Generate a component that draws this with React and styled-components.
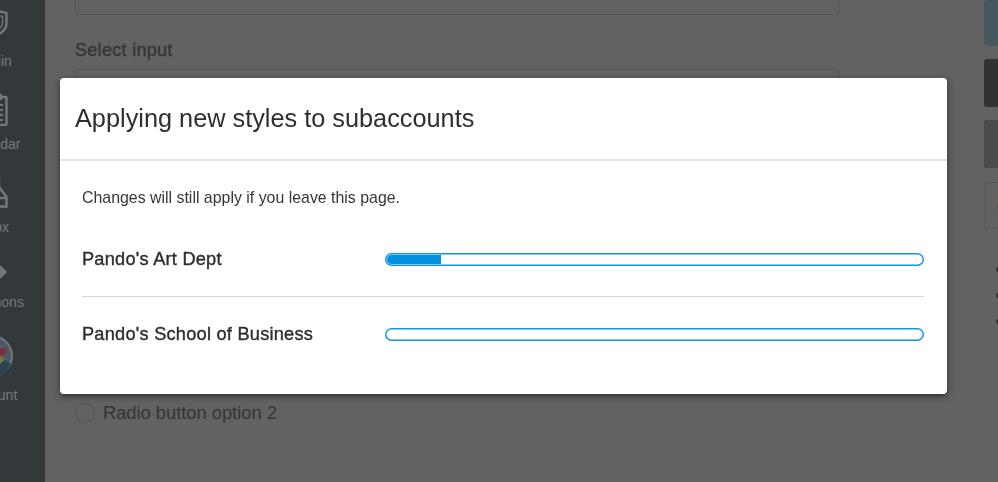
import React from 'react';
import styled, { createGlobalStyle } from 'styled-components';

const GlobalStyle = createGlobalStyle`
    html, body {
        margin: 0;
        padding: 0;
        height: 100%;
        overflow: hidden;
        background: #626262;
        font-family: "Liberation Sans", Arial, sans-serif;
    }
`;

const Page = styled.div`
    display: flex;
    width: 998px;
    height: 482px;
    overflow: hidden;
    background: #626262;
`;

const Sidebar = styled.nav`
    flex: 0 0 45px;
    overflow: hidden;
    background: #33383b;
`;

const SidebarList = styled.div`
    display: flex;
    flex-direction: column;
    align-items: center;
    width: 90px;
    margin-left: -53px;
`;

const SidebarItem = styled.div`
    display: flex;
    flex-direction: column;
    align-items: center;
    gap: ${({ $gap }) => $gap}px;
    margin-top: ${({ $top }) => $top}px;
    color: #75787b;
`;

const SidebarLabel = styled.span`
    font-size: 14px;
    line-height: 20px;
    white-space: nowrap;
`;

const Main = styled.main`
    flex: 0 0 765px;
    margin-left: 30px;
`;

const Field = styled.div`
    height: 40px;
    border: 1px solid #585858;
    border-radius: 3px;
    box-sizing: border-box;
`;

const TopField = styled(Field)`
    margin-top: -25px;
`;

const FieldLabel = styled.label`
    display: block;
    margin: 25px 0 9px;
    font-size: 18px;
    line-height: 20px;
    letter-spacing: .3px;
    -webkit-text-stroke: .3px #343434;
    color: #343434;
`;

const RadioGroup = styled.div`
    display: flex;
    flex-direction: column;
    gap: 12px;
    margin-top: 262px;
`;

const RadioRow = styled.div`
    display: flex;
    align-items: center;
    gap: 8px;
    height: 20px;
    font-size: 18.3px;
    color: #343434;
`;

const RadioCircle = styled.span`
    width: 20px;
    height: 20px;
    box-sizing: border-box;
    border: 1px solid #555;
    border-radius: 50%;
`;

const SideColumn = styled.aside`
    display: flex;
    flex-direction: column;
    gap: 13px;
    flex: 0 0 24px;
    margin-left: 144px;
`;

const SideButton = styled.div`
    height: ${({ $height }) => $height}px;
    background: ${({ $color }) => $color};
    border-radius: 3px;
`;

const OutlineBox = styled.div`
    display: flex;
    align-items: center;
    height: 47px;
    margin-top: 1px;
    padding-left: 12px;
    box-sizing: border-box;
    border: 1px solid #585858;
    border-radius: 3px;
    color: #2c2c2c;
    font-size: 16px;
    font-weight: bold;
`;

const Bullets = styled.div`
    display: flex;
    flex-direction: column;
    gap: 21px;
    margin: 25px 0 0 12px;
`;

const Bullet = styled.span`
    width: 5px;
    height: 5px;
    border-radius: 50%;
    background: #303030;
`;

const Overlay = styled.div`
    position: fixed;
    top: 0;
    left: 0;
    width: 100%;
    height: 100%;
    box-sizing: border-box;
    padding: 78px 0 0 60px;
`;

const Modal = styled.section`
    width: 887px;
    height: 316px;
    overflow: hidden;
    background: #fff;
    border-radius: 4px;
    box-shadow: 0 2px 6px rgba(0, 0, 0, .55);
`;

const ModalHeader = styled.header`
    display: flex;
    align-items: center;
    height: 81px;
    padding-left: 15px;
    border-bottom: 2px solid #e2e2e2;
`;

const ModalTitle = styled.h1`
    margin: 0;
    font-size: 25.3px;
    font-weight: normal;
    color: #2d2f31;
`;

const ModalBody = styled.div`
    padding: 25px 23px 0 22px;
`;

const Intro = styled.p`
    margin: 0 0 12px;
    font-size: 15.9px;
    line-height: 24px;
    color: #33373a;
`;

const AccountRow = styled.div`
    display: grid;
    grid-template-columns: 303px 1fr;
    align-items: center;
    height: 74px;
    & + & {
        border-top: 1px solid #d6d6d6;
    }
`;

const AccountName = styled.span`
    font-size: 18.2px;
    letter-spacing: .24px;
    -webkit-text-stroke: .4px #2d2f31;
    color: #2d2f31;
`;

const ProgressTrack = styled.div`
    display: flex;
    height: 13px;
    box-sizing: border-box;
    padding: 2px;
    border-radius: 7px;
    box-shadow: inset 0 0 0 1.5px #0c97e6;
    overflow: hidden;
`;

const ProgressFill = styled.div`
    height: 100%;
    background: #0090e0;
    border-radius: 5px 0 0 5px;
`;

const ShieldIcon = () => (
    <svg width="32" height="30" viewBox="0 0 32 30" fill="none" stroke="#75787b" strokeWidth="2.4">
        <path d="M16 1.5 L30.5 5 V15 C30.5 22 24 27 16 29 C8 27 1.5 22 1.5 15 V5 Z" />
        <path d="M16 6 L26.5 8.5 V15 C26.5 19 23 22 16 24.5" strokeWidth="1.4" />
    </svg>
);

const CalendarIcon = () => (
    <svg width="32" height="33" viewBox="0 0 32 33" fill="none" stroke="#75787b" strokeWidth="2.4">
        <rect x="1.5" y="4" width="29" height="28" rx="1" />
        <path d="M22 1 V7 M25 1 V7" strokeWidth="2" />
        <path d="M18 12 H27 M18 17 H27 M18 22 H27 M18 27 H27" strokeWidth="2" />
    </svg>
);

const InboxIcon = () => (
    <svg width="32" height="32" viewBox="0 0 32 32" fill="none" stroke="#75787b" strokeWidth="2.4">
        <path d="M23 1 V11 L30.5 21 V30.5 H1.5 V21 L9 11 V1" />
        <path d="M1.5 22 H30.5" />
    </svg>
);

const CommonsIcon = () => (
    <svg width="30" height="20" viewBox="0 0 30 20" fill="#75787b">
        <path d="M0 10 L10 0 H20 L30 10 L20 20 H10 Z" />
    </svg>
);

const AccountIcon = () => (
    <svg width="44" height="42" viewBox="0 0 44 42">
        <circle cx="22" cy="21" r="20" fill="#4d5a65" stroke="#74787b" strokeWidth="2" />
        <path d="M20 13 L38 13 L34 20 L30 21 Z" fill="#7d3237" />
        <path d="M24 20 L30 20 L35 25 L30 29 Z" fill="#7c7440" />
        <path d="M30 29 L35 25 L41 29 C39 34 35 38 30 40 L24 38 Z" fill="#2b4253" />
    </svg>
);

const navItems = [
    { label: 'Admin', icon: <ShieldIcon />, top: 8, gap: 13 },
    { label: 'Calendar', icon: <CalendarIcon />, top: 22, gap: 8 },
    { label: 'Inbox', icon: <InboxIcon />, top: 22, gap: 9 },
    { label: 'Commons', icon: <CommonsIcon />, top: 25, gap: 10 },
    { label: 'Account', icon: <AccountIcon />, top: 23, gap: 8 },
];

const accounts = [
    { name: "Pando's Art Dept", progress: 10 },
    { name: "Pando's School of Business", progress: 0 },
];

export default function App() {
    return (
        <>
            <GlobalStyle />
            <Page>
                <Sidebar>
                    <SidebarList>
                        {navItems.map(item => (
                            <SidebarItem key={item.label} $top={item.top} $gap={item.gap}>
                                {item.icon}
                                <SidebarLabel>{item.label}</SidebarLabel>
                            </SidebarItem>
                        ))}
                    </SidebarList>
                </Sidebar>
                <Main>
                    <TopField />
                    <FieldLabel>Select input</FieldLabel>
                    <Field />
                    <RadioGroup>
                        <RadioRow><RadioCircle />Radio button option 1</RadioRow>
                        <RadioRow><RadioCircle />Radio button option 2</RadioRow>
                    </RadioGroup>
                </Main>
                <SideColumn>
                    <SideButton $height={46} $color="#46595f" />
                    <SideButton $height={48} $color="#323232" />
                    <SideButton $height={48} $color="#4a4a4a" />
                    <OutlineBox>(</OutlineBox>
                    <Bullets>
                        <Bullet />
                        <Bullet />
                        <Bullet />
                    </Bullets>
                </SideColumn>
            </Page>
            <Overlay>
                <Modal>
                    <ModalHeader>
                        <ModalTitle>Applying new styles to subaccounts</ModalTitle>
                    </ModalHeader>
                    <ModalBody>
                        <Intro>Changes will still apply if you leave this page.</Intro>
                        {accounts.map(account => (
                            <AccountRow key={account.name}>
                                <AccountName>{account.name}</AccountName>
                                <ProgressTrack>
                                    <ProgressFill style={{ width: `${account.progress}%` }} />
                                </ProgressTrack>
                            </AccountRow>
                        ))}
                    </ModalBody>
                </Modal>
            </Overlay>
        </>
    );
}
